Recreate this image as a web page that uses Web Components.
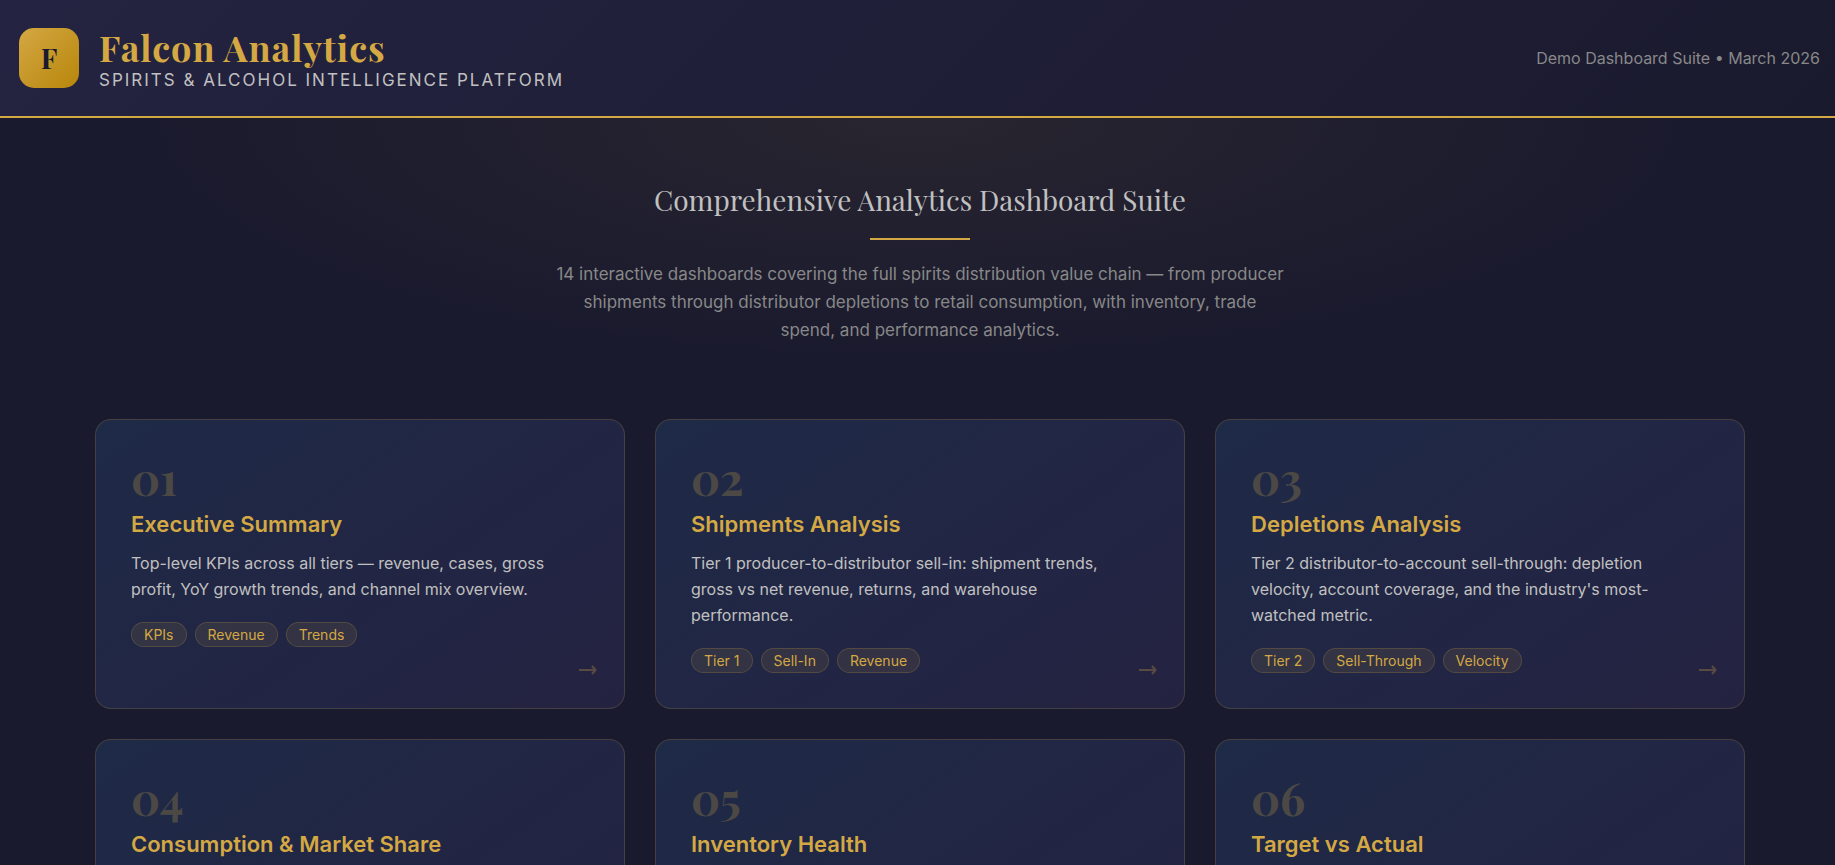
<!DOCTYPE html>
<html lang="en">
<head>
<meta charset="utf-8">
<title>Falcon Analytics</title>
<style>
  :root {
    --ink: #1a1a2e;
    --gold: #d4a843;
    --silver: #c0c0c0;
    --muted: #888888;
    --serif: "Playfair Display", "Liberation Serif", serif;
    --sans: Inter, sans-serif;
  }
  body { margin: 0; min-height: 100vh; background: var(--ink); font-family: var(--sans); color: var(--silver); overflow-x: hidden; }
</style>
</head>
<body>
<falcon-header date="Demo Dashboard Suite • March 2026">Falcon Analytics<span slot="tagline">Spirits &amp; Alcohol Intelligence Platform</span></falcon-header>
<main>
  <falcon-hero heading="Comprehensive Analytics Dashboard Suite">14 interactive dashboards covering the full spirits distribution value chain — from producer shipments through distributor depletions to retail consumption, with inventory, trade spend, and performance analytics.</falcon-hero>
  <dashboard-grid>
    <dashboard-card number="01" heading="Executive Summary" tags="KPIs,Revenue,Trends">Top-level KPIs across all tiers — revenue, cases, gross profit, YoY growth trends, and channel mix overview.</dashboard-card>
    <dashboard-card number="02" heading="Shipments Analysis" tags="Tier 1,Sell-In,Revenue">Tier 1 producer-to-distributor sell-in: shipment trends, gross vs net revenue, returns, and warehouse performance.</dashboard-card>
    <dashboard-card number="03" heading="Depletions Analysis" tags="Tier 2,Sell-Through,Velocity">Tier 2 distributor-to-account sell-through: depletion velocity, account coverage, and the industry's most-watched metric.</dashboard-card>
    <dashboard-card number="04" heading="Consumption &amp; Market Share"></dashboard-card>
    <dashboard-card number="05" heading="Inventory Health"></dashboard-card>
    <dashboard-card number="06" heading="Target vs Actual"></dashboard-card>
  </dashboard-grid>
</main>
<script>
function shadow(host, html) {
  const root = host.attachShadow({ mode: "open" });
  const t = document.createElement("template");
  t.innerHTML = html;
  root.append(t.content.cloneNode(true));
  return root;
}

customElements.define("falcon-header", class extends HTMLElement {
  constructor() {
    super();
    const root = shadow(this, `
      <style>
        :host { display: block; background: linear-gradient(135deg, #242341 0%, #1a1a2e 100%); border-bottom: 2px solid var(--gold); }
        header { display: flex; align-items: center; justify-content: space-between; padding: 25px 15px 25px 19px; }
        .brand { display: flex; align-items: center; gap: 20px; }
        .logo { display: grid; place-items: center; width: 60px; height: 60px; border-radius: 15px; background: linear-gradient(135deg, var(--gold), #b8860b); color: var(--ink); font: 700 28px/1 var(--serif); }
        h1 { margin: 0; color: var(--gold); font: 700 36px/45px var(--serif); letter-spacing: 1px; }
        p { margin: 0; font-size: 17px; line-height: 21px; letter-spacing: 2px; text-transform: uppercase; }
        .date { color: var(--muted); font-size: 16px; }
      </style>
      <header>
        <div class="brand">
          <div class="logo">F</div>
          <div><h1><slot></slot></h1><p><slot name="tagline"></slot></p></div>
        </div>
        <div class="date"></div>
      </header>`);
    root.querySelector(".date").textContent = this.getAttribute("date");
  }
});

customElements.define("falcon-hero", class extends HTMLElement {
  constructor() {
    super();
    const root = shadow(this, `
      <style>
        :host { display: block; background: radial-gradient(ellipse at top, rgba(212, 168, 67, 0.08) 0%, transparent 60%); }
        section { display: flex; flex-direction: column; align-items: center; padding: 60px 20px 60px 25px; text-align: center; }
        h2 { margin: 0; font: 400 28px/44px var(--serif); }
        hr { width: 100px; height: 2px; margin: 16px 0 20px; border: 0; background: var(--gold); }
        p { max-width: 730px; margin: 0; color: var(--muted); font-size: 17px; line-height: 28px; }
      </style>
      <section><h2></h2><hr><p><slot></slot></p></section>`);
    root.querySelector("h2").textContent = this.getAttribute("heading");
  }
});

customElements.define("dashboard-grid", class extends HTMLElement {
  constructor() {
    super();
    shadow(this, `
      <style>
        :host { display: grid; grid-template-columns: repeat(3, minmax(0, 1fr)); grid-auto-rows: minmax(290px, auto); gap: 30px; max-width: 1650px; margin: 0 auto; padding: 15px 20px 0 25px; }
      </style>
      <slot></slot>`);
  }
});

customElements.define("dashboard-card", class extends HTMLElement {
  constructor() {
    super();
    const root = shadow(this, `
      <style>
        :host { display: grid; }
        a { position: relative; display: block; padding: 35px; border: 1px solid rgba(212, 168, 67, 0.2); border-radius: 16px; background: linear-gradient(145deg, #1e2a47, #242241); color: inherit; text-decoration: none; }
        .number { color: var(--gold); opacity: 0.25; font: 700 45px/45px var(--serif); }
        h3 { margin: 11px 0 13px; color: var(--gold); font-size: 22px; font-weight: 600; line-height: 26px; }
        p { margin: 0; padding-right: 8px; font-size: 16px; line-height: 26px; }
        ul { display: flex; flex-wrap: wrap; gap: 8px; margin: 20px 0 0; padding: 0; list-style: none; }
        li { padding: 0 12px; border: 1px solid rgba(212, 168, 67, 0.2); border-radius: 20px; background: rgba(212, 168, 67, 0.1); color: var(--gold); font-size: 14px; line-height: 23px; }
        .arrow { position: absolute; right: 27px; bottom: 33px; width: 18px; height: 10px; fill: none; stroke: var(--gold); stroke-width: 2; opacity: 0.3; }
      </style>
      <a href="#">
        <div class="number"></div>
        <h3></h3>
        <p><slot></slot></p>
        <ul></ul>
        <svg class="arrow" viewBox="0 0 18 10" aria-hidden="true"><path d="M0 5h16.500M13 1l3.500 4-3.500 4"/></svg>
      </a>`);
    root.querySelector(".number").textContent = this.getAttribute("number");
    root.querySelector("h3").textContent = this.getAttribute("heading");
    const tags = (this.getAttribute("tags") || "").split(",").filter(Boolean);
    root.querySelector("ul").append(...tags.map(tag => {
      const li = document.createElement("li");
      li.textContent = tag;
      return li;
    }));
  }
});
</script>
</body>
</html>
